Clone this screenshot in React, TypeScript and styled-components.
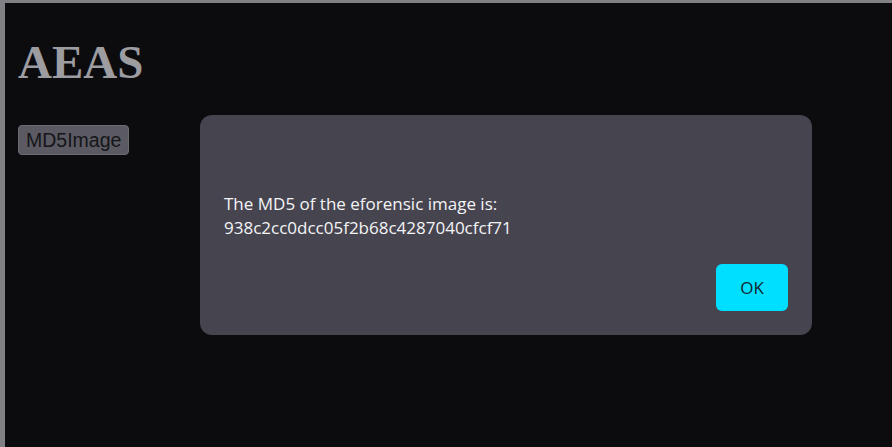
import React from "react";
import styled, { createGlobalStyle } from "styled-components";

const GlobalStyle = createGlobalStyle`
  html, body {
    margin: 0;
    padding: 0;
    height: 100%;
  }
  body {
    background: #0c0c0f;
    border-top: 3px solid #808085;
    border-left: 5px solid #808085;
    box-sizing: border-box;
    overflow: hidden;
  }
`;

// #region Styled components

const Page = styled("div")`
  padding: 0 13px;
  display: flex;
  flex-direction: column;
  align-items: flex-start;
`;

const Title = styled("h1")`
  margin: 32px 0 0;
  font-family: "Liberation Serif", "Times New Roman", serif;
  font-size: 47px;
  font-weight: bold;
  line-height: 55px;
  color: #9c9ca1;
`;

const ActionButton = styled("button")`
  margin-top: 35px;
  padding: 4px 7px;
  font-family: "Liberation Sans", Arial, sans-serif;
  font-size: 19.5px;
  line-height: 20px;
  color: #151519;
  background: #5b5a62;
  border: 1px solid #6c6b73;
  border-radius: 4px;
`;

const Dialog = styled("div")`
  position: fixed;
  top: 115px;
  left: 200px;
  width: 612px;
  height: 220px;
  box-sizing: border-box;
  padding: 24px;
  background: #46444f;
  border-radius: 12px;
  display: flex;
  flex-direction: column;
  justify-content: flex-end;
  gap: 24px;
  font-family: "Open Sans", "Noto Sans", sans-serif;
`;

const Message = styled("p")`
  margin: 0;
  font-size: 17px;
  line-height: 24px;
  color: #f4f4f6;
`;

const Footer = styled("div")`
  display: flex;
  justify-content: flex-end;
`;

const OkButton = styled("button")`
  width: 72px;
  height: 47px;
  border: none;
  border-radius: 6px;
  background: #00dfff;
  color: #13242e;
  font-family: inherit;
  font-size: 17px;
`;

// #endregion

const App = () => {
  return (
    <>
      <GlobalStyle />
      <Page>
        <Title>AEAS</Title>
        <ActionButton>MD5Image</ActionButton>
      </Page>
      <Dialog>
        <Message>
          The MD5 of the eforensic image is:
          <br />
          938c2cc0dcc05f2b68c4287040cfcf71
        </Message>
        <Footer>
          <OkButton>OK</OkButton>
        </Footer>
      </Dialog>
    </>
  );
};

export default App;
